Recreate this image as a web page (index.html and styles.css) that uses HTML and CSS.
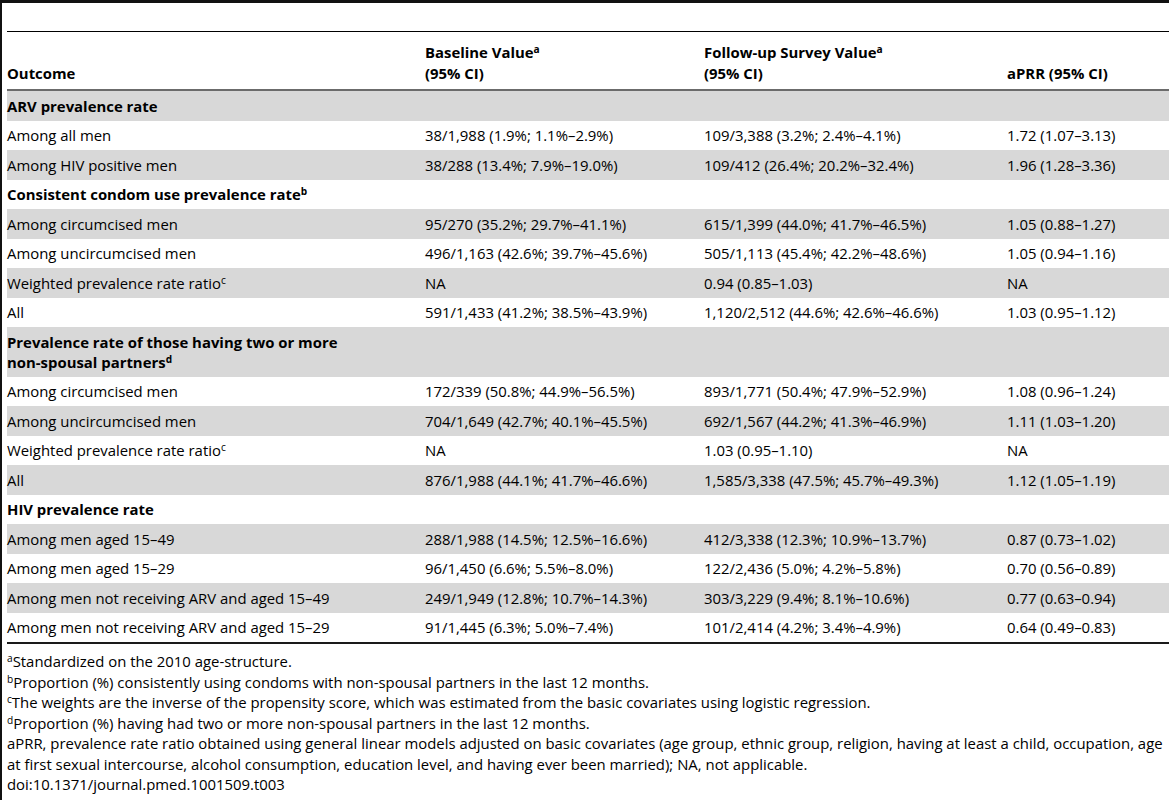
FILE: index.html
```html
<!DOCTYPE html>
<html lang="en">
<head>
<meta charset="utf-8">
<title>Table 3</title>
<link rel="stylesheet" href="styles.css">
</head>
<body>
<div class="page">
  <div class="caption-space"></div>
  <table class="data">
    <colgroup>
      <col class="c1"><col class="c2"><col class="c3"><col class="c4">
    </colgroup>
    <thead>
      <tr>
        <th>Outcome</th>
        <th>Baseline Value<sup>a</sup><br>(95% CI)</th>
        <th>Follow-up Survey Value<sup>a</sup><br>(95% CI)</th>
        <th>aPRR (95% CI)</th>
      </tr>
    </thead>
    <tbody>
      <tr class="section"><td>ARV prevalence rate</td><td></td><td></td><td></td></tr>
      <tr><td>Among all men</td><td>38/1,988 (1.9%; 1.1%–2.9%)</td><td>109/3,388 (3.2%; 2.4%–4.1%)</td><td>1.72 (1.07–3.13)</td></tr>
      <tr><td>Among HIV positive men</td><td>38/288 (13.4%; 7.9%–19.0%)</td><td>109/412 (26.4%; 20.2%–32.4%)</td><td>1.96 (1.28–3.36)</td></tr>
      <tr class="section"><td>Consistent condom use prevalence rate<sup>b</sup></td><td></td><td></td><td></td></tr>
      <tr><td>Among circumcised men</td><td>95/270 (35.2%; 29.7%–41.1%)</td><td>615/1,399 (44.0%; 41.7%–46.5%)</td><td>1.05 (0.88–1.27)</td></tr>
      <tr><td>Among uncircumcised men</td><td>496/1,163 (42.6%; 39.7%–45.6%)</td><td>505/1,113 (45.4%; 42.2%–48.6%)</td><td>1.05 (0.94–1.16)</td></tr>
      <tr><td>Weighted prevalence rate ratio<sup>c</sup></td><td>NA</td><td>0.94 (0.85–1.03)</td><td>NA</td></tr>
      <tr><td>All</td><td>591/1,433 (41.2%; 38.5%–43.9%)</td><td>1,120/2,512 (44.6%; 42.6%–46.6%)</td><td>1.03 (0.95–1.12)</td></tr>
      <tr class="section"><td>Prevalence rate of those having two or more <span class="nowrap">non-spousal</span> partners<sup>d</sup></td><td></td><td></td><td></td></tr>
      <tr><td>Among circumcised men</td><td>172/339 (50.8%; 44.9%–56.5%)</td><td>893/1,771 (50.4%; 47.9%–52.9%)</td><td>1.08 (0.96–1.24)</td></tr>
      <tr><td>Among uncircumcised men</td><td>704/1,649 (42.7%; 40.1%–45.5%)</td><td>692/1,567 (44.2%; 41.3%–46.9%)</td><td>1.11 (1.03–1.20)</td></tr>
      <tr><td>Weighted prevalence rate ratio<sup>c</sup></td><td>NA</td><td>1.03 (0.95–1.10)</td><td>NA</td></tr>
      <tr><td>All</td><td>876/1,988 (44.1%; 41.7%–46.6%)</td><td>1,585/3,338 (47.5%; 45.7%–49.3%)</td><td>1.12 (1.05–1.19)</td></tr>
      <tr class="section"><td>HIV prevalence rate</td><td></td><td></td><td></td></tr>
      <tr><td>Among men aged 15–49</td><td>288/1,988 (14.5%; 12.5%–16.6%)</td><td>412/3,338 (12.3%; 10.9%–13.7%)</td><td>0.87 (0.73–1.02)</td></tr>
      <tr><td>Among men aged 15–29</td><td>96/1,450 (6.6%; 5.5%–8.0%)</td><td>122/2,436 (5.0%; 4.2%–5.8%)</td><td>0.70 (0.56–0.89)</td></tr>
      <tr><td>Among men not receiving ARV and aged 15–49</td><td>249/1,949 (12.8%; 10.7%–14.3%)</td><td>303/3,229 (9.4%; 8.1%–10.6%)</td><td>0.77 (0.63–0.94)</td></tr>
      <tr><td>Among men not receiving ARV and aged 15–29</td><td>91/1,445 (6.3%; 5.0%–7.4%)</td><td>101/2,414 (4.2%; 3.4%–4.9%)</td><td>0.64 (0.49–0.83)</td></tr>
    </tbody>
  </table>
  <div class="notes">
    <p><sup>a</sup>Standardized on the 2010 age-structure.</p>
    <p><sup>b</sup>Proportion (%) consistently using condoms with non-spousal partners in the last 12 months.</p>
    <p><sup>c</sup>The weights are the inverse of the propensity score, which was estimated from the basic covariates using logistic regression.</p>
    <p><sup>d</sup>Proportion (%) having had two or more non-spousal partners in the last 12 months.</p>
    <p>aPRR, prevalence rate ratio obtained using general linear models adjusted on basic covariates (age group, ethnic group, religion, having at least a child, occupation, age at first sexual intercourse, alcohol consumption, education level, and having ever been married); NA, not applicable.</p>
    <p>doi:10.1371/journal.pmed.1001509.t003</p>
  </div>
</div>
</body>
</html>
```

FILE: styles.css
```css
html, body {
  margin: 0;
  padding: 0;
  background: #fff;
}

body {
  font-family: "Open Sans", "Noto Sans", sans-serif;
  font-size: 14.9px;
  color: #000;
  overflow: hidden;
}

.page {
  border-top: 3px solid #111;
  border-left: 2px solid #111;
  padding-left: 5px;
  height: 797px;
  overflow: hidden;
}

.caption-space {
  height: 28px;
  border-bottom: 1px solid #000;
  width: 1162px;
}

.data {
  border-collapse: collapse;
  table-layout: fixed;
  width: 1162px;
  border-bottom: 2px solid #1a1a1a;
}

.c1 { width: 418px; }
.c2 { width: 279px; }
.c3 { width: 303px; }
.c4 { width: 162px; }

.data th {
  text-align: left;
  vertical-align: bottom;
  font-weight: bold;
  height: 58px;
  box-sizing: border-box;
  padding: 0 0 6px 0;
  line-height: 20.5px;
  border-bottom: 2px solid #6b6b6b;
}

.data td {
  padding: 4.75px 0;
  line-height: 20px;
  vertical-align: top;
}

.data tbody tr:nth-child(odd) td {
  background: #d8d8d8;
}

.data tr.section td {
  font-weight: bold;
}

.data tr.section td:first-child {
  padding-right: 40px;
}

.nowrap {
  white-space: nowrap;
}

sup {
  font-size: 0.68em;
  line-height: 0;
  vertical-align: 0.5em;
}

.notes {
  margin-top: 7px;
  width: 1162px;
}

.notes p {
  margin: 0;
  line-height: 20.5px;
}
```
